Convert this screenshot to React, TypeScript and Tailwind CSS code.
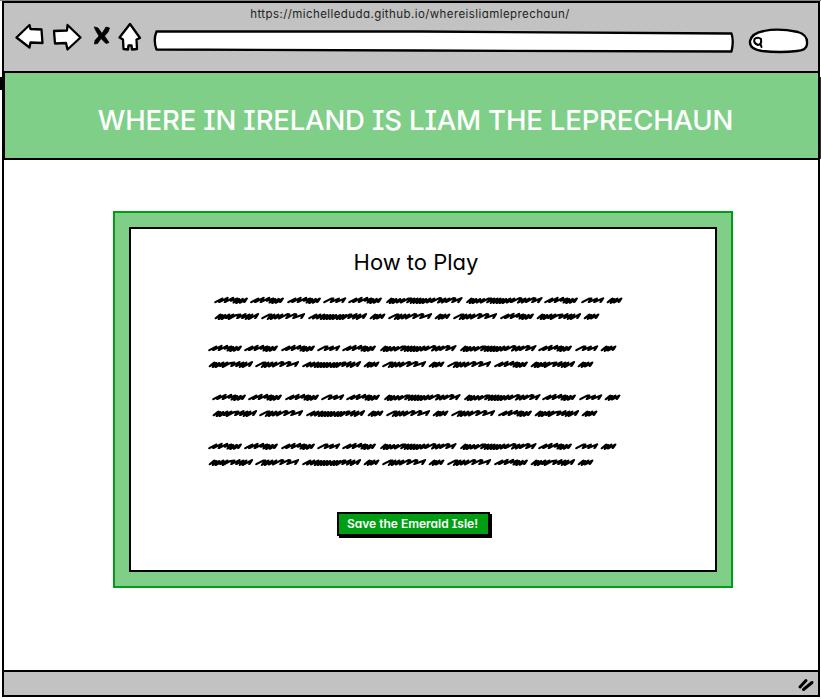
const WORDS: Record<string, [number, string]> = {
  man: [31.4, 'M1 8L6 4.5L5 8L11 3.800L10.500 8L16.500 3.800L16 6.500L21 4.500L19.500 8.500L23 5L22.500 9L26.500 4.800L26 8.800L30.500 4.500L30 8'],
  sun: [20.6, 'M1 8L6 4.500L8 4.500L7.500 8L13.500 4.500L13 8L19.700 4.200L19.200 8'],
  long: [75, 'M4 4.5L2 8L6 5L5 9L9 5L8 9L13 5L12 8.5L17 5L16 8.5L21 4.5L24 4.5L22 8L27 4.5L26 9L30 4.5L29 9L33 4.5L32 9L36 5L35 9L39 5L38 9L43 4.5L42 8.5L47 4.5L46 8L52 4L54 4.5L53 8.5L58 4.5L57 8.5L62 4.5L61 8L66 4L68 4.5L67 8L74 4L73 8'],
  us: [13.8, 'M4 4.500L1.500 8L6 5L5 9L9 4.500L8 8.500L13 4.500L12.500 8'],
  guy: [42, 'M4 4.500L1.500 8L6 5L5 9L9 5L8 9L13 4.5L12 8L17 4.5L15 9L20 5L24 4.5L23 8L29 4L28 8L33 4.5L32 9L36 4.5L35 9L41.500 4L41 8'],
  turn: [41.6, 'M1 8L6 4.500L8 4.500L7 9L11 4.500L10 9L15 4.500L14 8.500L19 4.500L18 8.500L24 4L26 4.500L25 8L31 4L33 4.500L32 8L40.500 4L40 8'],
  mid: [56.4, 'M1 8L6 4.5L5 8.5L10 4.5L9 8.5L14 4.5L13 9L17 5L16 9L20 5L19 9L23 5L22 9L26 5L25 9L30 5L29 9L33 5L32 9L36 5L35 9L39 4.5L41 4.5L40 8L46 4L45 8.5L50 4.5L49 9L55.500 4L55 8'],
}
const LINE_ONE = ['man', 'man', 'man', 'sun', 'man', 'long', 'long', 'man', 'sun', 'us']
const LINE_TWO = ['guy', 'turn', 'mid', 'us', 'turn', 'us', 'turn', 'man', 'guy', 'us']

function Scribble({ words, className }: { words: string[]; className: string }) {
  return (
    <div className={className}>
      {words.map((word, i) => (
        <svg key={i} width={WORDS[word][0]} height="12" className="shrink-0 overflow-visible" fill="none" stroke="#000" strokeWidth="2.7" strokeLinecap="round" strokeLinejoin="round">
          <path d={WORDS[word][1]} transform="translate(2.8 0.7) skewX(-24) scale(1 0.9)" />
        </svg>
      ))}
    </div>
  )
}

function Paragraph({ className }: { className: string }) {
  return (
    <div className={className}>
      <Scribble words={LINE_ONE} className="flex h-4 gap-[4.9px]" />
      <Scribble words={LINE_TWO} className="flex h-4 gap-[5px]" />
    </div>
  )
}

function Toolbar() {
  return (
    <div className="flex h-[46px] pl-[11px]">
      <svg width="800" height="46" viewBox="15 22 800 46" className="shrink-0" fill="#fff" stroke="#000" strokeWidth="2.3" strokeLinejoin="round" strokeLinecap="round">
        <path d="M16.500 37.500L29.500 25L30.500 29L41.500 29.500L42.500 43L30.500 42.500L29.500 47.500Z" />
        <path d="M54 31L67 30.500L67.500 25L80.500 37.500L67.500 49.500L66 43L55 43.500Z" />
        <path d="M94.500 27L98 28L102 33.500L106 27L109.500 28L108 32L104.500 36L109 42.500L106 43.500L101 38.500L97.500 43.500L94.500 44L95 40.500L99 36L96 31Z" fill="#000" strokeWidth="0.800" />
        <path d="M130 24L140 38L136.500 39.500L137 49L132 49.500L131.500 45.500L128.500 45.500L128 49.500L123.500 49L123 39.500L119.500 37.500Z" />
        <path d="M156.500 31.500L420 31.500L731.500 33.500Q734 41 731.500 51.500L420 50.500L156.500 49.500Q153 40 156.500 31.500Z" />
        <path d="M764 31Q778 28 798 32Q808 35 807 44Q807 50 797 51Q780 53 762 51Q749 49 750 41Q752 33 764 31Z" />
        <path d="M754.500 39Q758 36.500 761 39Q762 44.500 758 45Q753 43 754.500 39M760.500 44L761.500 47" strokeWidth="2" />
      </svg>
    </div>
  )
}

export default function App() {
  return (
    <div className="relative h-[699px] w-[821px] overflow-hidden border-t border-[#858585] bg-white pl-[2px] font-['Inter','Noto_Sans',sans-serif] [font-feature-settings:'cv11','cv08']">
      <div className="flex h-[696px] w-[818px] flex-col border-2 border-black bg-white">
        <header className="h-[68px] shrink-0 bg-[#c2c2c2]">
          <div className="flex h-[19px] items-center justify-center pt-[5px] pr-[2px] text-[11.5px] text-[#222]">
            <span className="whitespace-nowrap tracking-[0.42px]">https://michelleduda.github.io/whereisliamleprechaun/</span>
          </div>
          <Toolbar />
        </header>
        <div className="flex h-[89px] shrink-0 items-center justify-center border-y-[2.500px] border-l border-black bg-[#80cf89] pt-[10px] pl-[8px]">
          <h1 className="whitespace-nowrap text-[27.5px] font-medium tracking-[-0.16px] text-white">WHERE IN IRELAND IS LIAM THE LEPRECHAUN</h1>
        </div>
        <main className="grow pt-[51px] pl-[109px]">
          <section className="h-[377px] w-[620px] border-2 border-[#009e12] bg-[#80cf89] p-[14px]">
            <div className="flex h-[345px] w-[588px] flex-col items-center border-2 border-black bg-white">
              <h2 className="mt-[18px] mr-[14px] h-[30px] whitespace-nowrap text-[22px] leading-[30px] text-black">How to Play</h2>
              <div className="w-full pt-[17px] pl-[78px]">
                <Paragraph className="ml-[6px] h-[48px]" />
                <Paragraph className="h-[49px]" />
                <Paragraph className="ml-[4px] h-[49px]" />
                <Paragraph className="h-[49px]" />
              </div>
              <button className="mt-[23px] mr-[19px] h-[24px] w-[153px] whitespace-nowrap border-2 border-black bg-[#009e12] pr-[2px] text-[12px] leading-[20px] font-semibold text-white shadow-[2px_2px_0_#000]">Save the Emerald Isle!</button>
            </div>
          </section>
        </main>
        <footer className="flex h-[25px] shrink-0 items-center justify-end border-t-2 border-black bg-[#c2c2c2] pr-[2px]">
          <svg width="20" height="20" stroke="#000" strokeWidth="3" strokeLinecap="round">
            <path d="M4 13L10 6.500M7.500 15.500L16 8.500" />
          </svg>
        </footer>
      </div>
      <div className="absolute top-[76px] left-0 h-[13px] w-1 bg-black" />
      <div className="absolute top-[76px] right-0 h-[82px] w-px bg-[#333]" />
      <div className="absolute top-[645px] left-[2px] h-[19px] w-[2px] bg-black" />
    </div>
  )
}
